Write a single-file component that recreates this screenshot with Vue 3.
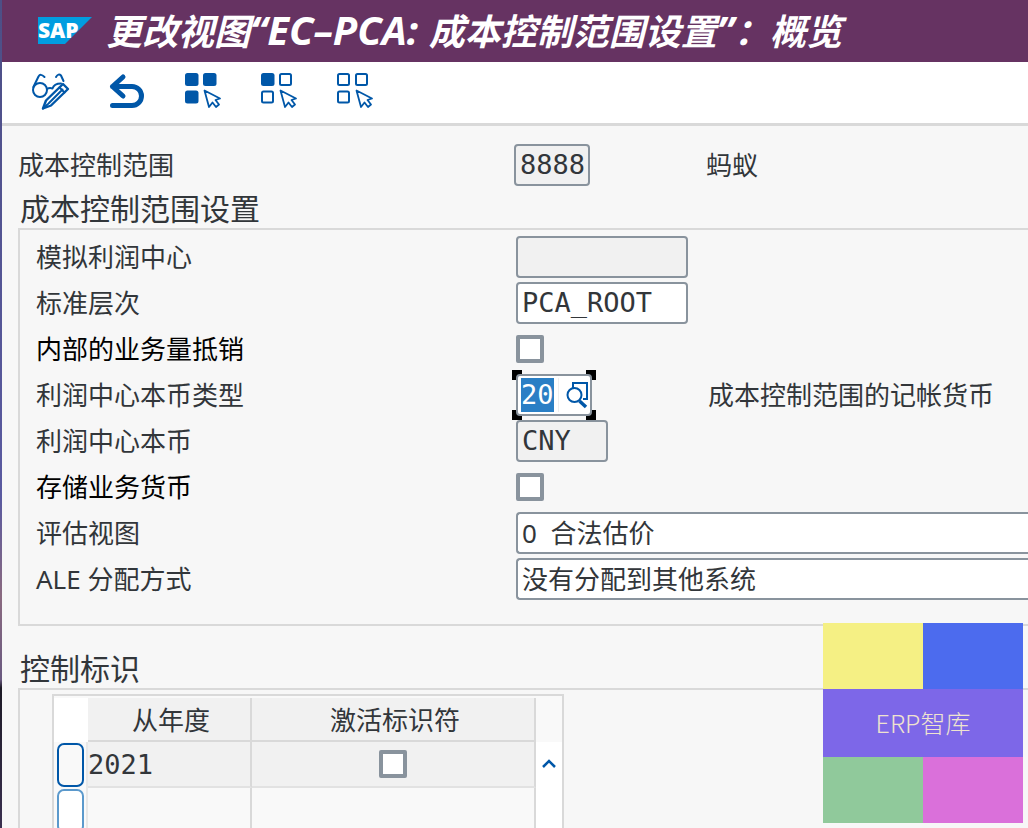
<script setup>
import { onMounted, ref } from 'vue'

const tools = [
  { id: 'toggle', label: '显示/更改' },
  { id: 'undo', label: '撤消' },
  { id: 'all', label: '全选', filled: [true, true, true] },
  { id: 'block', label: '选择块', filled: [true, false, false] },
  { id: 'none', label: '取消全选', filled: [false, false, false] },
]
const squares = [
  [2, 2],
  [20, 2],
  [2, 20],
]

const currencyType = ref('20')
const currencyInput = ref(null)

onMounted(() => {
  currencyInput.value.focus()
  currencyInput.value.select()
})
</script>

<template>
  <div class="window">
    <header class="titlebar">
      <svg class="logo" width="54" height="28" viewBox="0 0 54 28" role="img" aria-label="SAP">
        <path d="M0 0H54L27 27H0Z" fill="#009de0" />
        <text x="0" y="21" class="logo-text">SAP</text>
      </svg>
      <h1>更改视图<span class="latin">“EC–PCA: </span>成本控制范围设置<span class="latin">”</span>：概览</h1>
    </header>

    <nav class="toolbar">
      <button v-for="t in tools" :key="t.id" type="button" :aria-label="t.label">
        <svg width="40" height="40" viewBox="0 0 40 40" fill="none" stroke="#0057a8" stroke-width="2" stroke-linejoin="round" stroke-linecap="round">
          <template v-if="t.id === 'toggle'">
            <circle cx="9" cy="19" r="7" />
            <path d="M2.400 16L7.500 5.500Q9.500 2 13.500 6" />
            <path d="M25 6Q27.500 2 30 4.500L32.500 10" />
            <path d="M16 18Q18.500 16.500 21.500 17.500Q23 12.500 30 12.500" />
            <path d="M12 37.500L15 29.500L32 13L37 18L20 34.500Z" stroke-width="2.400" />
            <path d="M18 32L31.500 18.500M28.500 16.500L33.500 21.500M12 37.500L17 33" />
          </template>
          <path v-else-if="t.id === 'undo'" d="M16 6L5.500 15.500L16 25M5.500 15.500H25A9.500 9.500 0 0 1 25 34.500H5.500" stroke-width="5" />
          <template v-else>
            <template v-for="(s, i) in squares" :key="i">
              <rect v-if="t.filled[i]" :x="s[0]" :y="s[1] - (i === 2 ? 0.5 : 0)" width="13.500" height="13" rx="2.500" fill="#0057a8" stroke="none" />
              <rect v-else :x="s[0] + 1" :y="s[1] + (i === 2 ? 0.5 : 1)" width="11" height="11" rx="1.500" />
            </template>
            <path d="M21.500 19.500L37 27.500L32.500 29L36 33.500L33 36L29.500 31.500L26 36Z" stroke-width="1.800" />
          </template>
        </svg>
      </button>
    </nav>

    <main>
      <div class="row key-row">
        <label for="area">成本控制范围</label>
        <input id="area" class="field w-key mono" value="8888" readonly />
        <span class="note">蚂蚁</span>
      </div>

      <h2>成本控制范围设置</h2>
      <section class="panel settings">
        <div class="row">
          <label for="dummy">模拟利润中心</label>
          <input id="dummy" class="field w-wide mono" readonly />
        </div>
        <div class="row">
          <label for="hier">标准层次</label>
          <input id="hier" class="field w-wide mono" value="PCA_ROOT" />
        </div>
        <div class="row strong">
          <label for="elim">内部的业务量抵销</label>
          <input id="elim" type="checkbox" />
        </div>
        <div class="row">
          <label for="ctype">利润中心本币类型</label>
          <div class="focus-frame">
            <div class="combo">
              <input id="ctype" ref="currencyInput" v-model="currencyType" class="mono" />
              <button type="button" aria-label="搜索帮助">
                <svg width="24" height="30" viewBox="0 0 24 30" fill="none" stroke="#0057a8" stroke-width="2">
                  <path d="M8 8V3H22V19H18" />
                  <circle cx="9.500" cy="15" r="7" fill="#fff" />
                  <path d="M14.500 21L21 27" stroke-width="3.500" />
                </svg>
              </button>
            </div>
          </div>
          <span class="note">成本控制范围的记帐货币</span>
        </div>
        <div class="row">
          <label for="cur">利润中心本币</label>
          <input id="cur" class="field w-cur mono" value="CNY" readonly />
        </div>
        <div class="row strong">
          <label for="store">存储业务货币</label>
          <input id="store" type="checkbox" />
        </div>
        <div class="row">
          <label for="view">评估视图</label>
          <select id="view" class="field grow"><option>0&nbsp; 合法估价</option></select>
        </div>
        <div class="row">
          <label for="ale">ALE 分配方式</label>
          <select id="ale" class="field grow"><option>没有分配到其他系统</option></select>
        </div>
      </section>

      <h2 class="second">控制标识</h2>
      <section class="panel indicators">
        <div class="grid-box">
          <table>
            <colgroup><col class="c-sel" /><col class="c-year" /><col class="c-act" /></colgroup>
            <thead>
              <tr>
                <td class="corner"></td>
                <th scope="col">从年度</th>
                <th scope="col">激活标识符</th>
              </tr>
            </thead>
            <tbody>
              <tr class="filled">
                <td class="sel"><button type="button" aria-label="选择行 1"></button></td>
                <td class="mono">2021</td>
                <td class="center"><input type="checkbox" aria-label="激活标识符" /></td>
              </tr>
              <tr>
                <td class="sel"><button type="button" class="dim" aria-label="选择行 2"></button></td>
                <td></td>
                <td></td>
              </tr>
            </tbody>
          </table>
          <div class="scroller">
            <button type="button" aria-label="向上滚动">
              <svg width="16" height="12" viewBox="0 0 16 12" fill="none" stroke="#0057a8" stroke-width="2.500"><path d="M2 9L8 3L14 9" /></svg>
            </button>
          </div>
        </div>
      </section>
    </main>

    <aside class="badge">
      <i class="yellow"></i><i class="blue"></i>
      <span>ERP智库</span>
      <i class="green"></i><i class="pink"></i>
    </aside>
  </div>
</template>

<style>
body {
  margin: 0;
}
</style>

<style scoped>
.window,
.window * {
  box-sizing: border-box;
}
.window {
  position: relative;
  height: 100vh;
  overflow: hidden;
  border-left: 2px solid;
  border-image: linear-gradient(#4d4f86 0%, #5a5aa0 60%, #8a6a80 72%, #6a5a80 82%, #1d1a26 83%, #3a3050 100%) 1;
  background: #f7f7f7;
  color: #32363a;
  font-family: "Noto Sans", "Noto Sans CJK SC", sans-serif;
  font-size: 26px;
}
button,
input,
select {
  margin: 0;
  padding: 0;
  border: 0;
  background: none;
  color: inherit;
  font: inherit;
  outline: none;
}
.mono {
  font-family: "DejaVu Sans Mono", monospace;
  font-size: 27px;
}
.titlebar {
  display: flex;
  align-items: center;
  gap: 14px;
  height: 62px;
  padding-left: 36px;
  background: #663362;
}
.logo {
  flex: none;
}
.logo-text {
  fill: #fff;
  font: 900 21px "Noto Sans", sans-serif;
}
h1 {
  margin: 0;
  padding-bottom: 4px;
  color: #fff;
  font: italic bold 36px/58px "Noto Sans CJK SC", sans-serif;
  white-space: pre;
}
.latin {
  font-family: "Noto Sans", sans-serif;
  font-size: 40px;
  line-height: 1;
}
.toolbar {
  display: flex;
  gap: 36px;
  height: 64px;
  padding: 9px 29px 0;
  border-bottom: 3px solid #d9d9d9;
  background: #fff;
}
.toolbar button {
  width: 40px;
  height: 40px;
}
.toolbar svg {
  display: block;
}
main {
  padding: 16px 0 0 16px;
}
.row {
  display: grid;
  grid-template-columns: 480px 192px 1fr;
  align-items: center;
  height: 46px;
  white-space: nowrap;
}
.row label,
.note {
  padding-bottom: 2px;
}
.key-row {
  grid-template-columns: 496px 192px 1fr;
}
.strong {
  color: #000;
}
h2 {
  margin: 0 0 0 2px;
  padding-top: 2px;
  font-weight: 400;
  font-size: 30px;
  line-height: 38px;
}
.second {
  margin-top: 22px;
}
.panel {
  border: 2px solid #d9d9d9;
  border-right: 0;
}
.settings {
  padding: 4px 0 22px 16px;
}
.field {
  height: 42px;
  padding: 0 4px;
  border: 2px solid #89939d;
  border-radius: 4px;
  background: #fff;
}
input.field {
  padding-bottom: 2px;
}
.field:read-only:not(select) {
  background: #f1f1f1;
}
.w-key {
  width: 76px;
}
.w-wide {
  width: 172px;
}
.w-cur {
  width: 92px;
}
.grow {
  grid-column: 2 / 4;
  width: 100%;
  border-right: 0;
  border-radius: 4px 0 0 4px;
  appearance: none;
}
input[type="checkbox"] {
  display: block;
  width: 28px;
  height: 28px;
  border: 4px solid #89939d;
  border-radius: 2px;
  background: #fff;
  appearance: none;
}
.focus-frame {
  position: relative;
  width: 76px;
}
.focus-frame::before {
  content: "";
  position: absolute;
  inset: -4px;
  background:
    linear-gradient(#000, #000) 0 0 / 10px 10px,
    linear-gradient(#000, #000) 100% 0 / 10px 10px,
    linear-gradient(#000, #000) 0 100% / 10px 10px,
    linear-gradient(#000, #000) 100% 100% / 10px 10px;
  background-repeat: no-repeat;
}
.combo {
  position: relative;
  display: flex;
  align-items: center;
  height: 42px;
  padding-left: 3px;
  border: 2px solid #89939d;
  border-radius: 4px;
  background: #fff;
}
.combo input {
  width: 38px;
  height: 34px;
  border-right: 1px solid #eee;
  line-height: 34px;
}
.combo input::selection {
  background: #2a7fc5;
  color: #fff;
}
.combo button {
  margin-left: 6px;
}
.combo svg {
  display: block;
}
.indicators {
  height: 200px;
  padding: 4px 0 0 32px;
}
.grid-box {
  display: flex;
  width: 512px;
  border: 2px solid #d9d9d9;
  background: #f9f9f9;
}
table {
  padding-top: 2px;
  border-spacing: 0;
  table-layout: fixed;
  width: 482px;
  background: #f9f9f9;
}
.c-sel {
  width: 34px;
}
.c-year {
  width: 164px;
}
.c-act {
  width: 284px;
}
th,
td {
  height: 46px;
  padding: 0;
  border-right: 2px solid #d9d9d9;
  border-bottom: 2px solid #e2e2e2;
}
th {
  height: 44px;
  padding: 2px 0 0 4px;
  border-bottom-color: #d9d9d9;
  background: #f1f1f1;
  font-weight: 400;
  line-height: 40px;
}
td.corner {
  height: 44px;
  border: 0;
  background: #fff;
}
td.sel {
  border-right-color: #e8e8e8;
  border-bottom: 0;
}
.sel button {
  display: block;
  width: 27px;
  height: 44px;
  margin-left: 3px;
  border: 2px solid #0057a8;
  border-radius: 7px;
}
.sel button.dim {
  border-color: #5b99cc;
  background: #fff;
}
.filled td:not(.sel) {
  background: #f1f1f1;
}
.center input {
  margin: 0 auto;
}
.scroller {
  width: 26px;
  margin-top: 46px;
  background: #fff;
}
.scroller button {
  display: block;
  width: 26px;
  height: 34px;
}
.badge {
  position: absolute;
  right: 5px;
  bottom: 5px;
  display: grid;
  grid-template: 66px 68px 66px / 100px 100px;
}
.badge span {
  grid-column: 1 / 3;
  background: #7d67e8;
  color: #efe3cf;
  font: 300 25px/66px "Noto Sans CJK SC", sans-serif;
  text-align: center;
}
.yellow {
  background: #f5f084;
}
.blue {
  background: #4c6bee;
}
.green {
  background: #90c99b;
}
.pink {
  background: #da70da;
}
</style>
